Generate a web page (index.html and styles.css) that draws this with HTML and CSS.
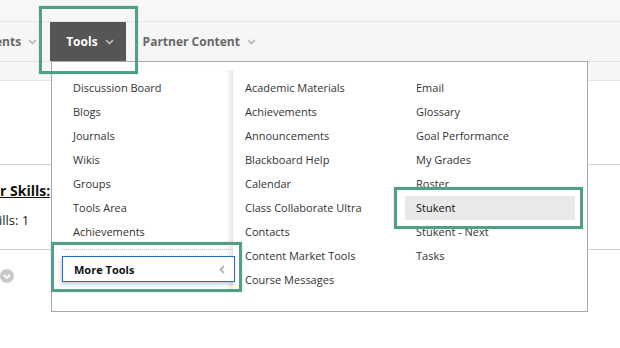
FILE: index.html
```html
<!DOCTYPE html>
<html>
<head>
<meta charset="utf-8">
<link rel="stylesheet" href="styles.css">
</head>
<body>
<div class="page">
  <div class="topstrip"></div>
  <nav class="nav">
    <div class="nav-item cut"><span>ents</span><svg class="chev" width="9" height="6" viewBox="0 0 9 6"><polyline points="1,1 4.5,4.5 8,1"/></svg></div>
    <div class="nav-item active"><span>Tools</span><svg class="chev" width="9" height="6" viewBox="0 0 9 6"><polyline points="1,1 4.5,4.5 8,1"/></svg></div>
    <div class="nav-item partner"><span>Partner Content</span><svg class="chev" width="9" height="6" viewBox="0 0 9 6"><polyline points="1,1 4.5,4.5 8,1"/></svg></div>
  </nav>
  <div class="subbar"></div>
  <main class="content">
    <div class="row"></div>
    <div class="row skills">
      <h3 class="skills-title">r Skills:</h3>
      <p class="skills-count">ills: 1</p>
    </div>
    <div class="row">
      <span class="circle-btn"><svg width="8" height="5" viewBox="0 0 8 5"><polyline points="1,1 4,4 7,1"/></svg></span>
    </div>
  </main>

  <div class="menu">
    <div class="col col1">
      <ul class="list">
        <li>Discussion Board</li>
        <li>Blogs</li>
        <li>Journals</li>
        <li>Wikis</li>
        <li>Groups</li>
        <li>Tools Area</li>
        <li>Achievements</li>
      </ul>
      <div class="sep"></div>
      <div class="more">
        <span>More Tools</span>
        <svg class="back" width="6" height="9" viewBox="0 0 6 9"><polyline points="5,1 1.5,4.5 5,8"/></svg>
      </div>
    </div>
    <div class="col col2">
      <ul class="list">
        <li>Academic Materials</li>
        <li>Achievements</li>
        <li>Announcements</li>
        <li>Blackboard Help</li>
        <li>Calendar</li>
        <li>Class Collaborate Ultra</li>
        <li>Contacts</li>
        <li>Content Market Tools</li>
        <li>Course Messages</li>
      </ul>
    </div>
    <div class="col col3">
      <ul class="list">
        <li>Email</li>
        <li>Glossary</li>
        <li>Goal Performance</li>
        <li>My Grades</li>
        <li>Roster</li>
        <li class="hover">Stukent</li>
        <li>Stukent - Next</li>
        <li>Tasks</li>
      </ul>
    </div>
  </div>

  <div class="callout callout-tools"></div>
  <div class="callout callout-more"></div>
  <div class="callout callout-stukent"></div>
</div>
</body>
</html>
```

FILE: styles.css
```css
* { box-sizing: border-box; }
html, body { margin: 0; padding: 0; }
body {
  font-family: "Open Sans", "DejaVu Sans", sans-serif;
  background: #fff;
  width: 620px;
  height: 348px;
  overflow: hidden;
}
.page { position: relative; width: 620px; height: 348px; overflow: hidden; }

.topstrip { height: 22px; background: #f7f7f7; border-bottom: 1px solid #e6e6e6; }

.nav {
  height: 40px;
  background: #f6f6f6;
  border-bottom: 1px solid #e3e3e3;
  display: flex;
  align-items: stretch;
}
.nav-item {
  display: flex;
  align-items: center;
  gap: 7px;
  font-size: 12px;
  font-weight: 700;
  color: #686868;
  padding: 0 13px 0 17px;
  white-space: nowrap;
}
.nav-item.cut { margin-left: -21px; padding: 0 13px 0 16px; }
.nav-item.active { background: #555; color: #fff; padding: 0 12px 0 16px; }
.chev { fill: none; stroke: #b5b5b5; stroke-width: 1.6; }
.active .chev { stroke: #bdbdbd; }

.subbar { height: 19px; background: #f6f6f6; border-bottom: 1px solid #e3e3e3; }

.row { height: 85px; border-bottom: 1px solid #d0d0d0; }
.row:first-child { height: 84px; }
.skills { padding-top: 16px; }
.skills-title {
  margin: 0;
  font-size: 14px;
  line-height: 20px;
  font-weight: 700;
  color: #111;
  text-decoration: underline;
  white-space: nowrap;
}
.skills-count { margin: 10px 0 0 -1px; font-size: 13px; line-height: 18px; color: #222; }
.circle-btn {
  display: flex;
  align-items: center;
  justify-content: center;
  width: 14px;
  height: 14px;
  border-radius: 50%;
  background: #c8c8c8;
  margin: 19px 0 0 0;
}
.circle-btn svg { fill: none; stroke: #fff; stroke-width: 1.8; }

.menu {
  position: absolute;
  left: 51px;
  top: 61px;
  width: 537px;
  height: 251px;
  background: #fff;
  border: 1px solid #a8a8a8;
  display: flex;
  align-items: flex-start;
}
.col { flex: none; }
.col1 {
  width: 181px;
  margin-top: 8px;
  padding: 6px 0 10px;
  box-shadow: inset -7px 0 6px -5px rgba(0, 0, 0, 0.14);
}
.col2 { width: 172px; padding-top: 14px; }
.col3 { width: 170px; padding-top: 14px; }
.list { list-style: none; margin: 0; padding: 0; }
.list li {
  height: 24px;
  line-height: 24px;
  font-size: 11px;
  color: #333;
  white-space: nowrap;
}
.col1 .list li { padding-left: 21px; }
.col2 .list li { padding-left: 12px; }
.col3 .list li { padding-left: 11px; }
.list li.hover { background: #e9e9e9; color: #111; }

.sep { margin: 5px 0 0 10px; border-top: 1px dotted #bdbdbd; }
.more {
  margin: 6px 0 0 10px;
  width: 173px;
  height: 26px;
  border: 1px solid #1f6fc5;
  background: #fff;
  box-shadow: -1px 2px 4px rgba(0, 0, 0, 0.22);
  display: flex;
  align-items: center;
  justify-content: space-between;
  padding: 0 9px 0 11px;
  font-size: 11px;
  font-weight: 700;
  color: #111;
  position: relative;
}
.back { fill: none; stroke: #a5a5a5; stroke-width: 1.6; }

.callout {
  position: absolute;
  border: 3px solid #4fa084;
  box-shadow: 0 0 1px rgba(79, 160, 132, 0.6);
}
.callout-tools { left: 39px; top: 6px; width: 99px; height: 68px; }
.callout-more { left: 51px; top: 242px; width: 191px; height: 50px; }
.callout-stukent { left: 394px; top: 187px; width: 189px; height: 42px; }
```
